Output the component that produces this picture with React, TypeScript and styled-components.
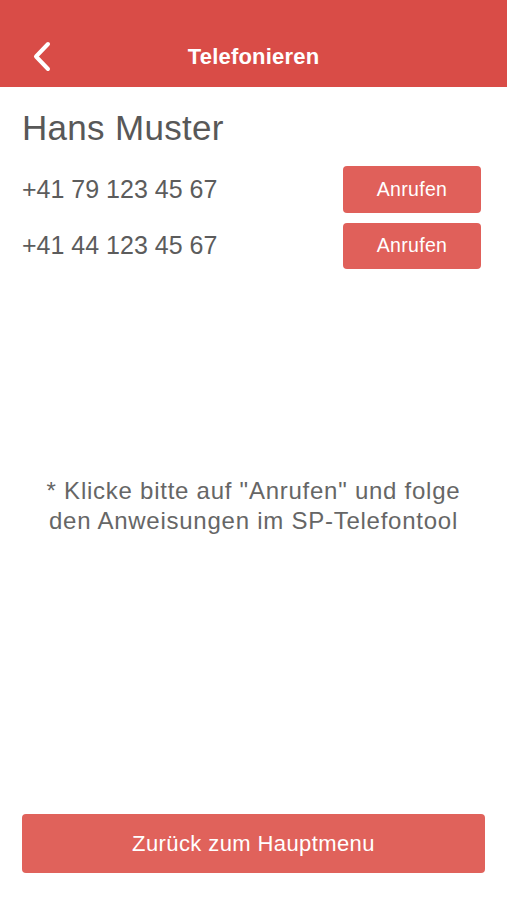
import React from 'react';
import styled, { createGlobalStyle } from 'styled-components';

const GlobalStyle = createGlobalStyle`
  html, body {
    margin: 0;
    padding: 0;
    background: #fff;
  }
  body {
    font-family: "Liberation Sans", Arial, sans-serif;
  }
`;

const numbers = ['+41 79 123 45 67', '+41 44 123 45 67'];

const App: React.FC = () => {
  return (
    <Page>
      <GlobalStyle />
      <Header>
        <BackButton aria-label="Zurück">
          <svg width="22" height="32" viewBox="0 0 22 32">
            <path
              d="M16 3 L4 15.5 L16 28"
              fill="none"
              stroke="#fff"
              strokeWidth="4"
              strokeLinecap="round"
              strokeLinejoin="round"
            />
          </svg>
        </BackButton>
        <Title>Telefonieren</Title>
      </Header>
      <Content>
        <Name>Hans Muster</Name>
        <List>
          {numbers.map((n) => (
            <Row key={n}>
              <Number>{n}</Number>
              <CallButton>Anrufen</CallButton>
            </Row>
          ))}
        </List>
        <Hint>
          * Klicke bitte auf "Anrufen" und folge
          <br />
          den Anweisungen im SP-Telefontool
        </Hint>
      </Content>
      <Footer>
        <MainButton>Zurück zum Hauptmenu</MainButton>
      </Footer>
    </Page>
  );
};

const Page = styled.div`
  width: 507px;
  height: 900px;
  display: flex;
  flex-direction: column;
  background: #fff;
`;

const Header = styled.div`
  position: relative;
  height: 87px;
  background: #d94c47;
  display: flex;
  align-items: flex-end;
  justify-content: center;
  padding-bottom: 17px;
  box-sizing: border-box;
`;

const BackButton = styled.div`
  position: absolute;
  left: 32px;
  top: 41px;
  display: flex;
`;

const Title = styled.div`
  color: #fff;
  font-size: 22px;
  font-weight: bold;
  line-height: 26px;
  letter-spacing: 0.2px;
`;

const Content = styled.div`
  flex: 1;
  display: flex;
  flex-direction: column;
  padding: 20px 26px 0 22px;
`;

const Name = styled.div`
  font-size: 35px;
  color: #585858;
  line-height: 42px;
  letter-spacing: 0.3px;
`;

const List = styled.div`
  display: flex;
  flex-direction: column;
  gap: 10px;
  margin-top: 17px;
`;

const Row = styled.div`
  display: flex;
  align-items: center;
  justify-content: space-between;
`;

const Number = styled.div`
  font-size: 25px;
  color: #5c5c5c;
`;

const CallButton = styled.div`
  width: 138px;
  height: 46.5px;
  border-radius: 4px;
  background: #e0605a;
  color: #fff;
  font-size: 19.5px;
  letter-spacing: 0.3px;
  display: flex;
  align-items: center;
  justify-content: center;
`;

const Hint = styled.div`
  margin-top: 207px;
  text-align: center;
  font-size: 24px;
  letter-spacing: 0.75px;
  line-height: 30px;
  color: #666;
  margin-right: -26px;
  margin-left: -22px;
`;

const Footer = styled.div`
  padding: 0 22px 27px 22px;
`;

const MainButton = styled.div`
  height: 59px;
  border-radius: 4px;
  background: #e0625b;
  color: #fff;
  font-size: 22px;
  letter-spacing: 0.4px;
  display: flex;
  align-items: center;
  justify-content: center;
`;

export default App;
